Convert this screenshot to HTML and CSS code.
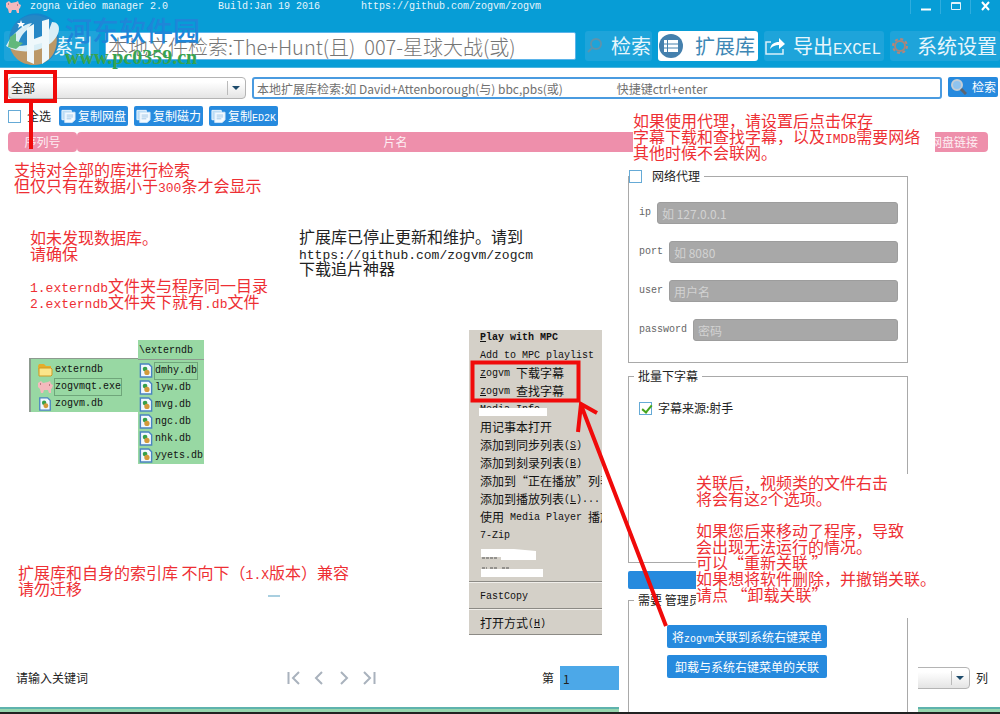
FILE: index.html
```html
<!DOCTYPE html>
<html lang="zh-CN">
  <head>
    <meta charset="UTF-8" />
    <meta name="viewport" content="width=device-width, initial-scale=1.0" />
    <title>zogna video manager 2.0</title>
    <link rel="stylesheet" href="styles.css">
  </head>
  <body>
    <!-- shared icons -->
    <svg class="defs" width="0" height="0">
      <symbol id="copy" viewBox="0 0 16 16">
        <path d="M1 2h10v10H1z" fill="#b9dcf6" stroke="#eef8ff"/>
        <path d="M4 4h11v8l-3 3H4z" fill="#f4faff" stroke="#cfe5f7"/>
        <path d="M6 7h7M6 9h7M6 11h5" stroke="#9fc6e6"/>
      </symbol>
      <symbol id="db" viewBox="0 0 14 16">
        <path d="M1 1h9l3 3v11H1z" fill="#f2f8ff" stroke="#4a83c0" stroke-width="1.5"/>
        <circle cx="6" cy="6.500" r="2.500" fill="#35a04a"/>
        <circle cx="8" cy="10" r="2.800" fill="#d39a3a"/>
      </symbol>
      <symbol id="pig" viewBox="0 0 16 14">
        <path d="M1 3l3-2 2 2 5-1 2-1 1 3 2 1-1 3-1 1v4h-2l-1-3H7l-1 3H4L3 9 1 7z" fill="#f5b9bd"/>
        <path d="M3 4h1M12 5h1" stroke="#8c3f49"/>
      </symbol>
    </svg>

    <div class="window">
      <header class="banner">
        <div class="titlebar">
          <svg class="app-icon" width="16" height="14"><use href="#pig"/></svg>
          <span class="app-name">zogna video manager 2.0</span>
          <span class="build">Build:Jan 19 2016</span>
          <a href="https://github.com/zogvm/zogvm">https://github.com/zogvm/zogvm</a>
          <div class="window-buttons">
            <button aria-label="最小化"><svg width="12" height="12"><path d="M1 9.500h10" stroke="#fff" stroke-width="2"/></svg></button>
            <button aria-label="最大化"><svg width="12" height="12"><path d="M1.500 2.500h9v7h-9zM1 3.500h10" fill="none" stroke="#dff2fb"/></svg></button>
            <button aria-label="关闭"><svg width="12" height="12"><path d="M2 2l7 8M9 2l-7 8" stroke="#fff" stroke-width="2"/></svg></button>
          </div>
        </div>
        <nav class="toolbar">
          <button class="tool index">索引</button>
          <input class="file-search" type="text" aria-label="本地文件检索" placeholder="本地文件检索:The+Hunt(且)&nbsp; 007-星球大战(或)">
          <button class="tool find">
            <svg width="18" height="20"><circle cx="11" cy="8" r="5" fill="none" stroke="#5d93ad" stroke-width="2"/><path d="M7 12l-4 4" stroke="#5d93ad" stroke-width="2"/></svg>
            检索
          </button>
          <button class="tool active">
            <svg width="24" height="24"><circle cx="12" cy="12" r="12" fill="#4580ad"/><path d="M5 6h14v12H5z" fill="#fff"/><path d="M5 10h14M5 14h14M8.500 6v12" stroke="#4580ad"/></svg>
            扩展库
          </button>
          <button class="tool">
            <svg width="20" height="20"><path d="M6 6H1v12h17v-5" fill="none" stroke="#d9effa" stroke-width="1.500"/><path d="M5 13c1-5 4-7 9-7V2l6 6-6 5V9c-4 0-6 1-9 4z" fill="#fff"/></svg>
            <span>导出<span class="en">EXCEL</span></span>
          </button>
          <button class="tool">
            <svg width="18" height="20"><circle cx="9" cy="10" r="5" fill="none" stroke="#a5867c" stroke-width="2"/><circle cx="9" cy="10" r="7" fill="none" stroke="#b5867a" stroke-width="2" stroke-dasharray="3 2.500"/></svg>
            系统设置
          </button>
        </nav>
      </header>

      <div class="search-row">
        <div class="combo library">
          <select aria-label="库"><option>全部</option></select>
        </div>
        <input class="lib-search" type="text" aria-label="本地扩展库检索" placeholder="本地扩展库检索:如 David+Attenborough(与) bbc,pbs(或)&nbsp;&nbsp;&nbsp;&nbsp;&nbsp;&nbsp;&nbsp;&nbsp;&nbsp;&nbsp;&nbsp;&nbsp;&nbsp;&nbsp;&nbsp;&nbsp;&nbsp;&nbsp;&nbsp;&nbsp;快捷键ctrl+enter">
        <button class="btn">
          <svg width="18" height="18"><circle cx="7" cy="7" r="5" fill="#8fc3ee" stroke="#c3cdd6" stroke-width="2"/><path d="M11 11l5 5" stroke="#5c6470" stroke-width="3"/></svg>
          检索
        </button>
      </div>

      <div class="copy-row">
        <label class="check select-all"><input type="checkbox">全选</label>
        <button class="btn"><svg width="16" height="16"><use href="#copy"/></svg>复制网盘</button>
        <button class="btn"><svg width="16" height="16"><use href="#copy"/></svg>复制磁力</button>
        <button class="btn"><svg width="16" height="16"><use href="#copy"/></svg><span>复制<span class="en">ED2K</span></span></button>
      </div>

      <table class="results">
        <thead>
          <tr><th class="col-no">序列号</th><th>片名</th><th class="col-link">网盘链接</th></tr>
        </thead>
      </table>

      <main class="space"></main>

      <footer class="pager">
        <span class="status">请输入关键词</span>
        <div class="pages">
          <button aria-label="首页"><svg width="14" height="14"><path d="M1.500 1v12M12 1L6 7l6 6"/></svg></button>
          <button aria-label="上一页"><svg width="14" height="14"><path d="M10 1L4 7l6 6"/></svg></button>
          <button aria-label="下一页"><svg width="14" height="14"><path d="M4 1l6 6-6 6"/></svg></button>
          <button aria-label="末页"><svg width="14" height="14"><path d="M12.500 1v12M2 1l6 6-6 6"/></svg></button>
        </div>
        <label class="page-no">第<input type="text" value="1"></label>
        <label class="column-pick"><span class="combo"><select><option></option></select></span>列</label>
      </footer>
      <div class="edge"></div>

      <!-- settings panel over the list -->
      <section class="panel">
        <fieldset class="proxy">
          <legend><label class="check"><input type="checkbox">网络代理</label></legend>
          <label class="field">ip<input type="text" placeholder="如 127.0.0.1"></label>
          <label class="field">port<input type="text" placeholder="如 8080"></label>
          <label class="field">user<input type="text" placeholder="用户名"></label>
          <label class="field">password<input type="password" placeholder="密码"></label>
        </fieldset>
        <fieldset class="subtitles">
          <legend>批量下字幕</legend>
          <label class="check"><input type="checkbox" checked>字幕来源:射手</label>
        </fieldset>
        <button class="btn save" aria-label="保存"></button>
        <fieldset class="admin">
          <legend>需要 管理员</legend>
          <button class="btn"><span>将<span class="en">zogvm</span>关联到系统右键菜单</span></button>
          <button class="btn">卸载与系统右键菜单的关联</button>
        </fieldset>
      </section>

      <!-- notes -->
      <p class="note note-proxy">如果使用代理，请设置后点击保存<br>字幕下载和查找字幕，以及<span class="en">IMDB</span>需要网络<br>其他时候不会联网。</p>
      <p class="note note-all">支持对全部的库进行检索<br>但仅只有在数据小于<span class="en">300</span>条才会显示</p>
      <p class="note note-db">如未发现数据库。<br>请确保<br><br><span class="en">1.externdb</span>文件夹与程序同一目录<br><span class="en">2.externdb</span>文件夹下就有<span class="en">.db</span>文件</p>
      <p class="note note-stop">扩展库已停止更新和维护。请到<br><a class="en" href="https://github.com/zogvm/zogcm">https://github.com/zogvm/zogcm</a><br>下载追片神器</p>
      <p class="note note-version">扩展库和自身的索引库 不向下（<span class="en">1.X</span>版本）兼容<br>请勿迁移</p>
      <p class="note note-link">关联后，视频类的文件右击<br>将会有这<span class="en">2</span>个选项。<br><br>如果您后来移动了程序，导致<br>会出现无法运行的情况。<br>可以“重新关联 ”<br>如果想将软件删除，并撤销关联。<br>请点 “卸载关联”</p>

      <!-- folder listing -->
      <div class="folder">
        <ul class="files root">
          <li><svg width="16" height="14"><path d="M1 3l1-2h5l2 2h5v2H4L2 12z" fill="#e5ad2c"/><path d="M2 5h12l1 1v6l-1 1H2z" fill="#fbe58a" stroke="#cf9a25"/></svg><span>externdb</span></li>
          <li><svg width="16" height="14"><use href="#pig"/></svg><span class="picked">zogvmqt.exe</span></li>
          <li><svg width="16" height="14"><use href="#db"/></svg><span>zogvm.db</span></li>
        </ul>
        <div class="sub">
          <div class="path">\externdb</div>
          <ul class="files">
            <li><svg width="14" height="15"><use href="#db"/></svg><span class="picked">dmhy.db</span></li>
            <li><svg width="14" height="15"><use href="#db"/></svg><span>lyw.db</span></li>
            <li><svg width="14" height="15"><use href="#db"/></svg><span>mvg.db</span></li>
            <li><svg width="14" height="15"><use href="#db"/></svg><span>ngc.db</span></li>
            <li><svg width="14" height="15"><use href="#db"/></svg><span>nhk.db</span></li>
            <li><svg width="14" height="15"><use href="#db"/></svg><span>yyets.db</span></li>
          </ul>
        </div>
      </div>

      <!-- context menu -->
      <div class="menu">
        <button><b class="en"><u>P</u>lay with MPC</b></button>
        <button><span class="en">Add to MPC playlist</span></button>
        <button><span class="en"><u>z</u>ogvm </span>下载字幕</button>
        <button><span class="en"><u>z</u>ogvm </span>查找字幕</button>
        <button class="erased"><span class="en">Media Info</span></button>
        <button>用记事本打开</button>
        <button>添加到同步列表<span class="en">(<u>S</u>)</span></button>
        <button>添加到刻录列表<span class="en">(<u>B</u>)</span></button>
        <button>添加到“正在播放”列表</button>
        <button>添加到播放列表<span class="en">(<u>L</u>)...</span></button>
        <button>使用<span class="en"> Media Player </span>播放</button>
        <button><span class="en">7-Zip</span></button>
        <svg class="scribble" width="70" height="36"><path d="M0 3h33l22 2v9H20v-3H0zM0 23h62v8H0z" fill="#fff"/><path d="M1 12h16M1 22h5M9 22h8M21 22h7" stroke="#555" stroke-dasharray="3 1"/></svg>
        <hr>
        <button><span class="en">FastCopy</span></button>
        <hr>
        <button>打开方式<span class="en">(<u>H</u>)</span></button>
      </div>

      <!-- red marks -->
      <svg class="marks" width="1000" height="714">
        <path d="M6 72h49v29H6zM31 103v46"/>
        <path d="M472.500 362.500h106v38h-106zM666 626L581 405M578 432l3-28 16 9"/>
        <path class="dash" d="M268 596h12"/>
      </svg>

      <div class="watermark">
        <svg width="60" height="56" viewBox="0 0 60 56">
          <path d="M7 17A26 26 0 0 1 50 10C38 4 18 7 7 17z" fill="#1784cb"/>
          <circle cx="29" cy="28" r="25" fill="#2687c5"/>
          <path d="M4 31c8 7 34 6 46-12 6 15-3 34-21 34C15 53 6 44 4 31z" fill="#bc9867"/>
          <path d="M1 34C7 22 18 12 27 11l-5 7c-5 4-8 9-9 16 11 0 22-4 31-16l3-8c10 0 9 13-1 21C35 40 15 43 1 34z" fill="#d9eef6"/>
          <path d="M22 16l7-4v15l8-3V9l7-2v40l-7 5V31l-8 2v19l-7-3z" fill="#eff8fb"/>
          <path d="M5 25l6-4v8l7 2-7 6-8-2z" fill="#62b87c"/>
          <path d="M16 8l1 3h3l-2 2 1 3-3-2-3 2 1-3-2-2h3z" fill="#fff"/>
        </svg>
        <div class="site">
          <strong>河东软件园</strong>
          <span>www.pc0359.cn</span>
        </div>
      </div>
    </div>
  </body>
</html>
```

FILE: styles.css
```css
* {
  box-sizing: border-box;
}

body {
  margin: 0;
  background-color: #fff;
  color: #222;
  font-family: "Noto Sans CJK SC", sans-serif;
  font-size: 12px;
  line-height: 16px;
}

button, input, select {
  font: inherit;
  color: inherit;
  margin: 0;
}

button {
  border: 0;
  padding: 0;
  background: none;
  cursor: pointer;
  white-space: nowrap;
}

a {
  color: inherit;
  text-decoration: none;
}

.defs {
  position: absolute;
}

.window {
  position: relative;
  min-height: 100vh;
  display: flex;
  flex-direction: column;
  overflow: hidden;
}

.en, .titlebar, .files, .path {
  font-family: "Liberation Mono", monospace;
  font-size: 10px;
}

/* latin runs must not stretch the line */
.en {
  line-height: 0;
}

/* blue banner */
.banner {
  background-color: #079dd6;
  border-bottom: 1px solid #4db5df;
  padding-bottom: 6px;
}

.titlebar {
  display: flex;
  align-items: flex-start;
  color: #e6f5fc;
  line-height: 14px;
  height: 31px;
  padding-left: 5px;
}

.app-name {
  margin-left: 9px;
  width: 188px;
}

.build {
  width: 143px;
}

.window-buttons {
  margin-left: auto;
  display: flex;
}

.window-buttons button {
  width: 30px;
  height: 14px;
  border-left: 1px solid #2fadde;
}

.toolbar {
  display: flex;
  gap: 6px;
  padding-left: 4px;
  font-size: 20px;
}

.tool {
  display: flex;
  align-items: center;
  justify-content: space-between;
  gap: 8px;
  height: 30px;
  padding: 0 3px 0 1px;
  border-radius: 3px;
  background-color: #1ea4da;
  color: #e8f6fc;
}

.tool .en {
  font-size: 16px;
}

.tool.find {
  padding: 0 1px 0 0;
}

.tool.active {
  width: 100px;
  background-color: #fff;
  color: #3d87b5;
}

.index {
  width: 95px;
  justify-content: flex-end;
  padding-right: 6px;
}

.file-search {
  flex: 1;
  min-width: 0;
  height: 28px;
  margin: 1px 3px 0 0;
  padding: 0 2px;
  border: 1px solid #5bb4ea;
  border-radius: 2px;
  background-color: #fff;
  font-weight: 300;
}

.file-search::placeholder {
  color: #757575;
  opacity: 1;
}

/* search row */
.search-row {
  display: flex;
  gap: 6px;
  padding: 9px 2px 0 8px;
}

.combo {
  position: relative;
  display: block;
}

.combo select {
  appearance: none;
  width: 100%;
  height: 22px;
  padding: 0 2px;
  border: 1px solid #b4b4b4;
  border-radius: 4px;
  background: linear-gradient(#fff, #fff 20%, #e4e4e4);
  color: #111;
}

.combo::before {
  content: "";
  position: absolute;
  right: 18px;
  top: 4px;
  bottom: 4px;
  border-left: 1px solid #bbb;
}

.combo::after {
  content: "";
  position: absolute;
  right: 6px;
  top: 9px;
  border: 4px solid transparent;
  border-top-color: #1c4a6b;
  border-bottom: 0;
}

.library {
  width: 238px;
}

.lib-search {
  flex: 1;
  min-width: 0;
  height: 22px;
  padding: 0 3px;
  border: 2px solid #4a9be0;
  border-radius: 3px;
}

.lib-search::placeholder {
  color: #707070;
  opacity: 1;
}

.btn {
  display: flex;
  align-items: center;
  justify-content: center;
  gap: 2px;
  height: 20px;
  padding: 0 2px;
  border-radius: 2px;
  background-color: #268ade;
  color: #fff;
}

.search-row .btn {
  width: 50px;
  gap: 5px;
}

.copy-row {
  display: flex;
  gap: 6px;
  padding: 7px 8px 6px;
  align-items: center;
}

.copy-row .btn {
  width: 69px;
}

.check {
  display: flex;
  align-items: center;
  gap: 6px;
}

.check input {
  appearance: none;
  width: 13px;
  height: 13px;
  border: 1px solid #65aad6;
  background-color: #fff;
}

.check input:checked::before {
  content: "";
  display: block;
  width: 4px;
  height: 8px;
  margin-left: 4px;
  border: solid #45a51c;
  border-width: 0 2px 2px 0;
  transform: rotate(40deg);
}

.select-all {
  width: 45px;
}

.results {
  width: calc(100% - 20px);
  margin-left: 8px;
  border-collapse: separate;
  border-spacing: 0;
}

.results th {
  height: 20px;
  padding: 0;
  border-radius: 4px;
  background-color: #ee8fab;
  color: #fdeef3;
  font-weight: 400;
}

.results .col-no {
  width: 69px;
}

.results .col-link {
  width: 274px;
  padding-right: 10px;
  text-align: right;
}

.space {
  flex: 1;
  min-height: 300px;
}

/* footer */
.pager {
  display: flex;
  align-items: center;
  height: 24px;
  margin-bottom: 17px;
  padding: 0 12px 0 16px;
}

.status {
  width: 271px;
}

.pages {
  display: flex;
  gap: 11px;
  width: 255px;
}

.pages svg {
  display: block;
}

.pages path {
  fill: none;
  stroke: #a9b2bd;
  stroke-width: 2;
}

.page-no, .column-pick {
  display: flex;
  align-items: center;
  gap: 6px;
}

.page-no input {
  width: 120px;
  height: 24px;
  border: 0;
  padding: 0 3px;
  background-color: #4ca8e8;
}

.column-pick {
  margin-left: auto;
}

.column-pick .combo {
  width: 100px;
}

.edge {
  height: 7px;
  border-top: 2px solid #5fb3ad;
  border-bottom: 2px solid #222;
  background-color: #97d5ae;
}

/* settings panel */
.panel {
  position: absolute;
  left: 619px;
  top: 154px;
  bottom: 2px;
  width: 299px;
  padding: 14px 10px 0 9px;
  background-color: #fff;
  overflow: hidden;
}

.panel fieldset {
  margin: 0;
  border: 1px solid #a9a9a9;
}

.panel legend {
  padding: 0 4px;
  margin-left: -5px;
}

.proxy {
  height: 195px;
  padding: 18px 9px 0 10px;
}

.panel .proxy legend {
  padding-left: 0;
  margin-left: -10px;
}

.proxy .check {
  gap: 10px;
}

.field {
  display: flex;
  align-items: center;
  gap: 6px;
  margin-bottom: 17px;
  color: #666;
  font-family: "Liberation Mono", monospace;
  font-size: 10px;
}

.field input {
  flex: 1;
  min-width: 0;
  height: 22px;
  padding: 0 4px;
  border: 1px solid #9d9d9d;
  border-radius: 3px;
  background-color: #a8a8a8;
  font-family: "Noto Sans CJK SC", sans-serif;
  font-size: 12px;
}

.field input::placeholder {
  color: #d2d2d2;
  opacity: 1;
}

.panel .subtitles {
  height: 195px;
  margin-top: 5px;
  padding: 16px 10px 0;
}

.save {
  width: 100%;
  height: 18px;
  margin: 8px 0 3px;
}

.admin {
  height: 180px;
  padding: 17px 38px 0;
}

.panel .admin legend {
  margin-left: -33px;
}

.admin .btn {
  width: 160px;
  height: 23px;
  margin-bottom: 7px;
}

/* notes */
.note {
  position: absolute;
  margin: 0;
  color: #ee2f34;
  font-size: 16px;
  line-height: 16px;
  white-space: nowrap;
}

.note .en {
  font-size: 13px;
}

.note-proxy {
  left: 633px;
  top: 112px;
  width: 302px;
  height: 50px;
  background-color: #fff;
}

.note-all {
  left: 14px;
  top: 161px;
}

.note-db {
  left: 30px;
  top: 229px;
}

.note-stop {
  left: 299px;
  top: 228px;
  color: #222;
}

.note-version {
  left: 18px;
  top: 564px;
}

.note-link {
  left: 696px;
  top: 474px;
  width: 240px;
  height: 144px;
  background-color: #fff;
}

/* folder listing */
.folder {
  position: absolute;
  left: 29px;
  top: 340px;
  display: flex;
  align-items: flex-start;
  color: #111;
}

.files {
  list-style: none;
  margin: 0;
  padding: 2px 0 0 1px;
  border-top: 1px solid #8d9a8f;
  background-color: #98d8a3;
}

.files li {
  display: flex;
  align-items: center;
  gap: 2px;
  height: 17px;
}

.root {
  width: 109px;
  height: 54px;
  margin-top: 18px;
  padding-left: 6px;
  border-left: 2px solid #8d9a8f;
}

.picked {
  outline: 1px solid #6fa67a;
}

.sub {
  width: 66px;
  background-color: #98d8a3;
}

.path {
  height: 19px;
  padding: 3px 1px 0;
}

/* context menu */
.menu {
  position: absolute;
  left: 469px;
  top: 330px;
  width: 133px;
  overflow: hidden;
  background-color: #d4d0c8;
  border-bottom: 1px solid #8c8a85;
  color: #111;
}

.menu button {
  display: flex;
  height: 18px;
  padding-left: 11px;
  line-height: 14px;
}

.menu .en {
  line-height: 16px;
  white-space: pre;
}

.menu .erased {
  position: relative;
}

.erased::after {
  content: "";
  position: absolute;
  left: 10px;
  top: 6px;
  width: 68px;
  height: 8px;
  background-color: #fff;
}

.scribble {
  display: block;
  height: 34px;
  margin-left: 12px;
}

.menu hr {
  height: 2px;
  margin: 1px 0 6px;
  border: 0;
  border-top: 1px solid #8c8a85;
  background-color: #f1efeb;
}

.marks {
  position: absolute;
  left: 0;
  top: 0;
  pointer-events: none;
}

.marks path {
  fill: none;
  stroke: #f00a0a;
  stroke-width: 4;
}

.marks .dash {
  stroke: #a9cfe0;
  stroke-width: 2;
}

/* watermark */
.watermark {
  position: absolute;
  left: 5px;
  top: 12px;
  display: flex;
  pointer-events: none;
}

.site {
  display: flex;
  flex-direction: column;
}

.site strong {
  color: #1f86d8;
  font-size: 27px;
  line-height: 36px;
  font-weight: 500;
}

.site span {
  color: #37a350;
  font-family: "Liberation Serif", serif;
  font-size: 20px;
  font-weight: 700;
  line-height: 18px;
}
```
